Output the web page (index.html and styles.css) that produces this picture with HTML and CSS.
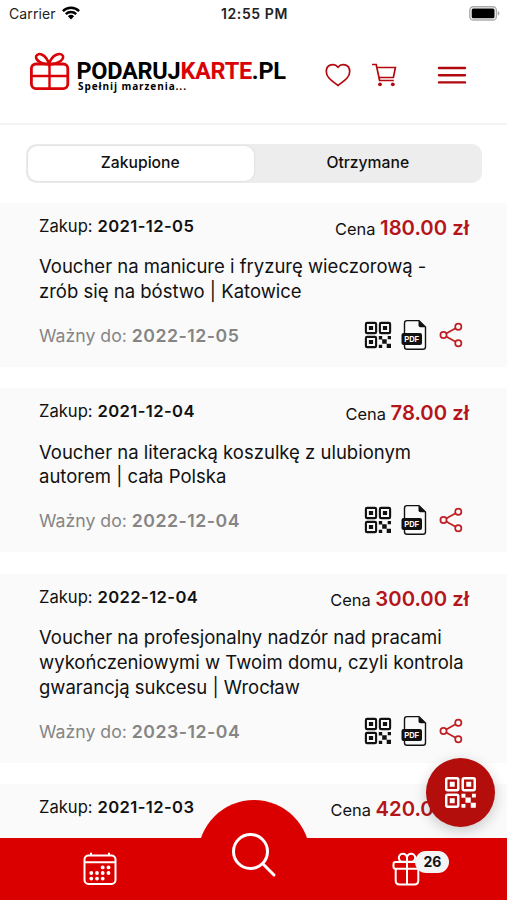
FILE: index.html
```html
<!DOCTYPE html>
<html lang="pl">
<head>
<meta charset="utf-8">
<title>PodarujKarte.pl</title>
<meta name="viewport" content="width=device-width, initial-scale=1">
<link rel="stylesheet" href="styles.css">
</head>
<body>
<svg class="sprite" aria-hidden="true">
  <symbol id="qr" viewBox="0 0 28 28">
    <g fill="none" stroke="currentColor" stroke-width="2.1">
      <rect x="1.9" y="1.9" width="10.2" height="10.2" rx="1.2"/>
      <rect x="15.9" y="1.9" width="10.2" height="10.2" rx="1.2"/>
      <rect x="1.9" y="15.9" width="10.2" height="10.2" rx="1.2"/>
    </g>
    <path fill="currentColor" d="M4.9 4.9h4.2v4.2H4.900zM18.900 4.900h4.200v4.200h-4.200zM4.900 18.900h4.200v4.200H4.900zM14.800 15h3.400v3.400h-3.400zM18.200 18.300h4.500v4.500h-4.500zM23.700 15h3.300v3.300h-3.300zM14.800 23.700h3.400V27h-3.400zM22.700 22.700H27V27h-4.300z"/>
  </symbol>
  <symbol id="pdf" viewBox="0 0 27 32">
    <path d="M3.500 15V4.200Q3.500 1.600 6 1.600h12l6.500 6.500v19.600q0 2.600-2.600 2.600H6.100q-2.600 0-2.600-2.600V25" fill="none" stroke="currentColor" stroke-width="1.400"/>
    <path d="M17.500 1.200v5q0 2 2 2h5.300z" fill="currentColor"/>
    <rect x=".5" y="14" width="20.500" height="12" rx="2" fill="currentColor"/>
    <text x="3.200" y="23" class="pdf-label" textLength="15" lengthAdjust="spacingAndGlyphs">PDF</text>
  </symbol>
  <symbol id="share" viewBox="0 0 24 26">
    <g fill="none" stroke="currentColor" stroke-width="1.7">
      <circle cx="4.5" cy="13" r="3.1"/><circle cx="19.3" cy="4.7" r="3.1"/><circle cx="19.3" cy="21.3" r="3.1"/>
      <path d="M7.2 11.5l9.4-5.3M7.2 14.5l9.4 5.3"/>
    </g>
  </symbol>
</svg>

<div class="app">
  <div class="status">
    <div class="carrier">Carrier
      <svg class="wifi" viewBox="0 0 18 14"><g fill="none" stroke="#000" stroke-width="2.4"><path d="M.9 5.1a11.6 11.6 0 0 1 16.2 0"/><path d="M3.8 8.2a7.4 7.4 0 0 1 10.4 0"/></g><path d="M5.9 10.3a4.5 4.5 0 0 1 6.2 0L9 13.6z"/></svg>
    </div>
    <div class="clock">12:55 PM</div>
    <svg class="battery" viewBox="0 0 31 15"><rect x=".8" y=".8" width="26.6" height="13.2" rx="3.6" fill="#fff" stroke="#aaa" stroke-width="1.4"/><rect x="2.7" y="2.6" width="22.8" height="9.6" rx="1.5"/><path d="M28.8 5q1.7 1 1.7 2.4t-1.7 2.4z" fill="#aaa"/></svg>
  </div>

  <header class="header">
    <svg class="logo" viewBox="0 0 258 44">
      <g fill="none" stroke="#d90307" stroke-width="2.8">
        <rect x="2.4" y="13" width="36.4" height="24.6" rx="4.5"/>
        <path d="M20.5 13v24.6M2.4 25h36.4" stroke-width="2.4"/>
        <path d="M20 13C13 14 6 9 7.200 5C9 1 17 3 20 13C23 3 32 1 34 5C35 9 28 14 20 13z" stroke-width="2.5"/>
      </g>
      <text class="wordmark" x="47.500" y="28.300" textLength="209.500" lengthAdjust="spacing">PODARUJ<tspan fill="#d90307">KARTE</tspan>.PL</text>
      <text class="tagline" x="49" y="39" textLength="108">Spełnij marzenia...</text>
    </svg>
    <svg class="heart" viewBox="0 0 26 24"><path d="M13 4.200C9.500-.3 1.300 1.200 1.300 8.500C1.300 14.500 6.500 17.500 13 22.500C19.500 17.500 24.700 14.500 24.700 8.500C24.700 1.200 16.500-.3 13 4.200z"/></svg>
    <svg class="cart" viewBox="0 0 26 24"><path d="M1 1.500h4.200l3.400 16h14.200M5.900 4.500h18.500l-2 10H8M8.600 17.500l-.7-3"/><circle cx="9" cy="21.300" r="1.900"/><circle cx="21.800" cy="21.300" r="1.900"/></svg>
    <svg class="menu" viewBox="0 0 30 20"><path d="M2 3h26M2 10.200h26M2 17.400h26"/></svg>
  </header>

  <main class="content">
    <div class="tabs"><div class="tab active">Zakupione</div><div class="tab">Otrzymane</div></div>

    <article class="card">
      <div class="top"><div class="bought">Zakup: <b>2021-12-05</b></div><div class="price">Cena <b>180.00 zł</b></div></div>
      <h2 class="title">Voucher na manicure i fryzurę wieczorową -<br>zrób się na bóstwo | Katowice</h2>
      <div class="bottom"><div class="valid">Ważny do: <b>2022-12-05</b></div><div class="actions"><svg class="qr"><use href="#qr"/></svg><svg class="pdf"><use href="#pdf"/></svg><svg class="share"><use href="#share"/></svg></div></div>
    </article>

    <article class="card">
      <div class="top"><div class="bought">Zakup: <b>2021-12-04</b></div><div class="price">Cena <b>78.00 zł</b></div></div>
      <h2 class="title">Voucher na literacką koszulkę z ulubionym<br>autorem | cała Polska</h2>
      <div class="bottom"><div class="valid">Ważny do: <b>2022-12-04</b></div><div class="actions"><svg class="qr"><use href="#qr"/></svg><svg class="pdf"><use href="#pdf"/></svg><svg class="share"><use href="#share"/></svg></div></div>
    </article>

    <article class="card">
      <div class="top"><div class="bought">Zakup: <b>2022-12-04</b></div><div class="price">Cena <b>300.00 zł</b></div></div>
      <h2 class="title">Voucher na profesjonalny nadzór nad pracami<br>wykończeniowymi w Twoim domu, czyli kontrola<br>gwarancją sukcesu | Wrocław</h2>
      <div class="bottom"><div class="valid">Ważny do: <b>2023-12-04</b></div><div class="actions"><svg class="qr"><use href="#qr"/></svg><svg class="pdf"><use href="#pdf"/></svg><svg class="share"><use href="#share"/></svg></div></div>
    </article>

    <article class="card">
      <div class="top"><div class="bought">Zakup: <b>2021-12-03</b></div><div class="price">Cena <b>420.00 zł</b></div></div>
    </article>
  </main>

  <nav class="nav">
    <div class="nav-item"><svg class="calendar" viewBox="0 0 34 34"><g fill="none" stroke="#fff" stroke-width="2"><rect x="1.500" y="3.500" width="31" height="28.500" rx="4"/><path d="M1.500 10.300h31M8 .7v3M26 .7v3"/></g><g fill="#fff"><circle cx="19.700" cy="15.400" r="1.900"/><circle cx="25.500" cy="15.400" r="1.900"/><circle cx="8.300" cy="21" r="1.900"/><circle cx="14" cy="21" r="1.900"/><circle cx="19.700" cy="21" r="1.900"/><circle cx="25.500" cy="21" r="1.900"/><circle cx="8.300" cy="26.600" r="1.900"/><circle cx="14" cy="26.600" r="1.900"/><circle cx="19.700" cy="26.600" r="1.900"/></g></svg></div>
    <div class="nav-item"><div class="search"><svg viewBox="0 0 46 46"><g fill="none" stroke="#fff" stroke-width="3" stroke-linecap="round"><circle cx="19.500" cy="19.500" r="17"/><path d="M31.800 31.800L43 43"/></g></svg></div></div>
    <div class="nav-item gifts"><svg class="gift" viewBox="0 0 30 34"><g fill="none" stroke="#fff" stroke-width="2"><rect x="1.500" y="10" width="27" height="6.800" rx="2"/><path d="M3.700 17v11.500q0 4 4 4h14.600q4 0 4-4V17M15 10v22.500"/><path d="M15 9.800h-3.600a4.100 4.100 0 1 1 3.600-4.300a4.100 4.100 0 1 1 3.600 4.300zM15 5.500v4.300"/></g></svg><span class="badge">26</span></div>
  </nav>
  <div class="fab"><svg><use href="#qr"/></svg></div>
</div>
</body>
</html>
```
FILE: styles.css
```css
* { box-sizing: border-box; }
body { margin: 0; font-family: Inter, "Liberation Sans", sans-serif; color: #111; background: #fff; }
svg { display: block; flex: none; }
.sprite { display: none; }
.app { position: relative; width: 507px; height: 900px; overflow: hidden; }

.status { display: grid; grid-template-columns: 1fr auto 1fr; align-items: center; height: 28px; padding: 0 7px 2px 9px; color: #222; }
.carrier { display: flex; align-items: center; gap: 6px; font-size: 14px; letter-spacing: 0.1px; }
.wifi { width: 18px; height: 14px; }
.clock { font-size: 14px; font-weight: 600; letter-spacing: 0.6px; }
.battery { width: 31px; height: 15px; justify-self: end; }

.header { display: flex; align-items: center; height: 97px; padding: 0 40px 2px 29px; border-bottom: 2px solid #f3f3f3; }
.logo { width: 258px; height: 44px; margin-top: -3px; }
.wordmark { font: 700 23.5px Roboto, sans-serif; }
.tagline { font: 700 10px "Open Sans", sans-serif; }
.heart, .cart, .menu { fill: none; stroke: #b3090e; stroke-width: 1.7; }
.heart { width: 26px; height: 24px; margin-left: 38px; }
.cart { width: 26px; height: 24px; margin-left: 20px; }
.cart circle { fill: #b3090e; stroke: none; }
.menu { width: 30px; height: 20px; margin-left: 40px; stroke-width: 2.4; stroke-linecap: round; }

.tabs { display: flex; width: 456px; height: 39px; margin: 19px 0 20px 26px; padding: 2px; border-radius: 10px; background: #ededed; }
.tab { flex: 1; display: flex; align-items: center; justify-content: center; font-size: 15.7px; font-weight: 500; padding-bottom: 2px; }
.tab:last-child { padding-left: 2px; }
.tab.active { padding-right: 1px; background: #fff; border-radius: 9px; box-shadow: 0 0 2px #ccc; }

.card { margin-bottom: 21.5px; padding: 12px 38px 16px 39px; background: #fafafa; }
.top { display: flex; justify-content: space-between; height: 39px; }
.bought { font-size: 16.6px; line-height: 23px; }
.bought b { margin-left: 0.3px; font-weight: 600; letter-spacing: 0.38px; }
.price { font-size: 16.4px; line-height: 26px; }
.price b { font-size: 20.3px; font-weight: 600; color: #b3151a; }
.title { margin: 0; padding-top: 0.4px; font-size: 18.5px; font-weight: 400; line-height: 24.6px; white-space: nowrap; }
.bottom { display: flex; justify-content: space-between; height: 32px; margin-top: 15.4px; }
.valid { font-size: 17.7px; line-height: 33px; color: #858585; }
.valid b { font-weight: 600; letter-spacing: 0.5px; }
.actions { display: flex; align-items: center; margin-right: 6px; }
.qr { width: 28px; height: 28px; margin-left: -1px; }
.pdf { width: 27px; height: 32px; margin-left: 9px; }
.share { width: 24px; height: 26px; margin-left: 11px; color: #c01e23; }
.pdf-label { font: 700 8.5px "Liberation Sans", sans-serif; fill: #fff; }

.nav { position: absolute; inset: auto 0 0 0; height: 62px; display: flex; align-items: center; padding: 0 23px; background: #db0000; }
.nav-item { flex: 1; display: flex; justify-content: center; }
.calendar { width: 34px; height: 34px; }
.search { display: flex; justify-content: center; flex: none; width: 112px; height: 112px; padding-top: 32px; border-radius: 50%; background: #db0000; transform: translateY(-13px); }
.search svg { width: 46px; height: 46px; }
.gifts { position: relative; }
.gift { width: 30px; height: 34px; }
.badge { position: absolute; left: 85px; top: -1px; width: 34px; height: 22px; border-radius: 11px; background: #f4f4f6; font-size: 14px; font-weight: 700; line-height: 22px; text-align: center; }
.fab { position: absolute; left: 426px; top: 758px; width: 69px; height: 69px; display: flex; align-items: center; justify-content: center; border-radius: 50%; background: #b30d0c; color: #fff; box-shadow: 0 4px 14px rgba(0,0,0,.2); }
.fab svg { width: 33px; height: 33px; }
```
